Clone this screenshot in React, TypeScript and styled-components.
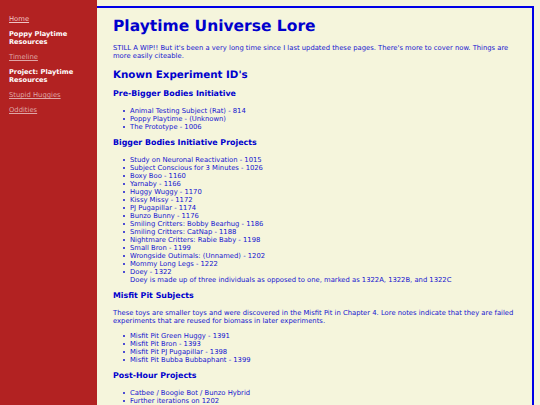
import React from "react";
import styled, { createGlobalStyle } from "styled-components";

const Global = createGlobalStyle`
  html, body { margin: 0; padding: 0; height: 100%; overflow: hidden; background: #f5f5dc; }
  #root { height: 100%; }
`;
const Page = styled.div`
  display: flex; height: 405px; overflow: hidden; text-rendering: geometricPrecision;
  font-family: "DejaVu Sans", Verdana, sans-serif; font-size: 6.8px; line-height: 8px; color: #1414d0;
`;
const Sidebar = styled.nav`
  width: 97px; flex: none; box-sizing: border-box; background: #b22222; padding: 15px 8px 0 9px;
  display: flex; flex-direction: column; gap: 7px;
`;
const NavLink = styled.a<{ $visited?: boolean }>`
  color: ${(p) => (p.$visited ? "#dfa6a6" : "#efc4c4")}; text-decoration: underline; line-height: 8px;
`;
const NavTitle = styled.div`
  color: #fff; font-weight: 700; font-size: 6.65px; line-height: 8px;
`;
const Main = styled.main`
  flex: 1; margin: 6px 6px 0 0; border-top: 2px solid #0000e6; border-right: 2px solid #0000e6;
  padding: 9px 12px 0 16px; overflow: hidden;
`;
const H1 = styled.h1`margin: 0 0 9px; font-size: 15.5px; line-height: 18px; font-weight: 700; color: #0000cd;`;
const H2 = styled.h2`margin: 8px 0 6px; font-size: 10.3px; line-height: 14px; font-weight: 700; color: #0000cd;`;
const H3 = styled.h3`margin: 6px 0 7.5px; font-size: 7.9px; line-height: 11px; font-weight: 700; color: #0000cd;`;
const P = styled.p`margin: 0 0 7px;`;
const List = styled.ul`margin: 0 0 6.5px; padding: 0 0 0 17px; list-style: none;`;
const Item = styled.li`
  position: relative;
  &::before {
    content: ""; position: absolute; left: -7px; top: 3px;
    width: 2.4px; height: 2.4px; border-radius: 50%; background: currentColor;
  }
`;

const pre = ["Animal Testing Subject (Rat) - 814", "Poppy Playtime - (Unknown)", "The Prototype - 1006"];
const bigger = ["Study on Neuronal Reactivation - 1015", "Subject Conscious for 3 Minutes - 1026", "Boxy Boo - 1160", "Yarnaby - 1166", "Huggy Wuggy - 1170", "Kissy Missy - 1172", "PJ Pugapillar - 1174", "Bunzo Bunny - 1176", "Smiling Critters: Bobby Bearhug - 1186", "Smiling Critters: CatNap - 1188", "Nightmare Critters: Rabie Baby - 1198", "Small Bron - 1199", "Wrongside Outimals: (Unnamed) - 1202", "Mommy Long Legs - 1222"];
const misfit = ["Misfit Pit Green Huggy - 1391", "Misfit Pit Bron - 1393", "Misfit Pit PJ Pugapillar - 1398", "Misfit Pit Bubba Bubbaphant - 1399"];
const post = ["Catbee / Boogie Bot / Bunzo Hybrid", "Further iterations on 1202"];

export default function App() {
  return (
    <Page>
      <Global />
      <Sidebar>
        <NavLink href="#">Home</NavLink>
        <NavTitle>Poppy Playtime Resources</NavTitle>
        <NavLink href="#" $visited>Timeline</NavLink>
        <NavTitle>Project: Playtime Resources</NavTitle>
        <NavLink href="#" $visited>Stupid Huggies</NavLink>
        <NavLink href="#" $visited>Oddities</NavLink>
      </Sidebar>
      <Main>
        <H1>Playtime Universe Lore</H1>
        <P>STILL A WIP!! But it's been a very long time since I last updated these pages. There's more to cover now. Things are more easily citeable.</P>
        <H2>Known Experiment ID's</H2>
        <H3>Pre-Bigger Bodies Initiative</H3>
        <List>{pre.map((t) => <Item key={t}>{t}</Item>)}</List>
        <H3>Bigger Bodies Initiative Projects</H3>
        <List>
          {bigger.map((t) => <Item key={t}>{t}</Item>)}
          <Item>Doey - 1322<br />Doey is made up of three individuals as opposed to one, marked as 1322A, 1322B, and 1322C</Item>
        </List>
        <H3>Misfit Pit Subjects</H3>
        <P>These toys are smaller toys and were discovered in the Misfit Pit in Chapter 4. Lore notes indicate that they are failed experiments that are reused for biomass in later experiments.</P>
        <List>{misfit.map((t) => <Item key={t}>{t}</Item>)}</List>
        <H3>Post-Hour Projects</H3>
        <List>{post.map((t) => <Item key={t}>{t}</Item>)}</List>
      </Main>
    </Page>
  );
}
